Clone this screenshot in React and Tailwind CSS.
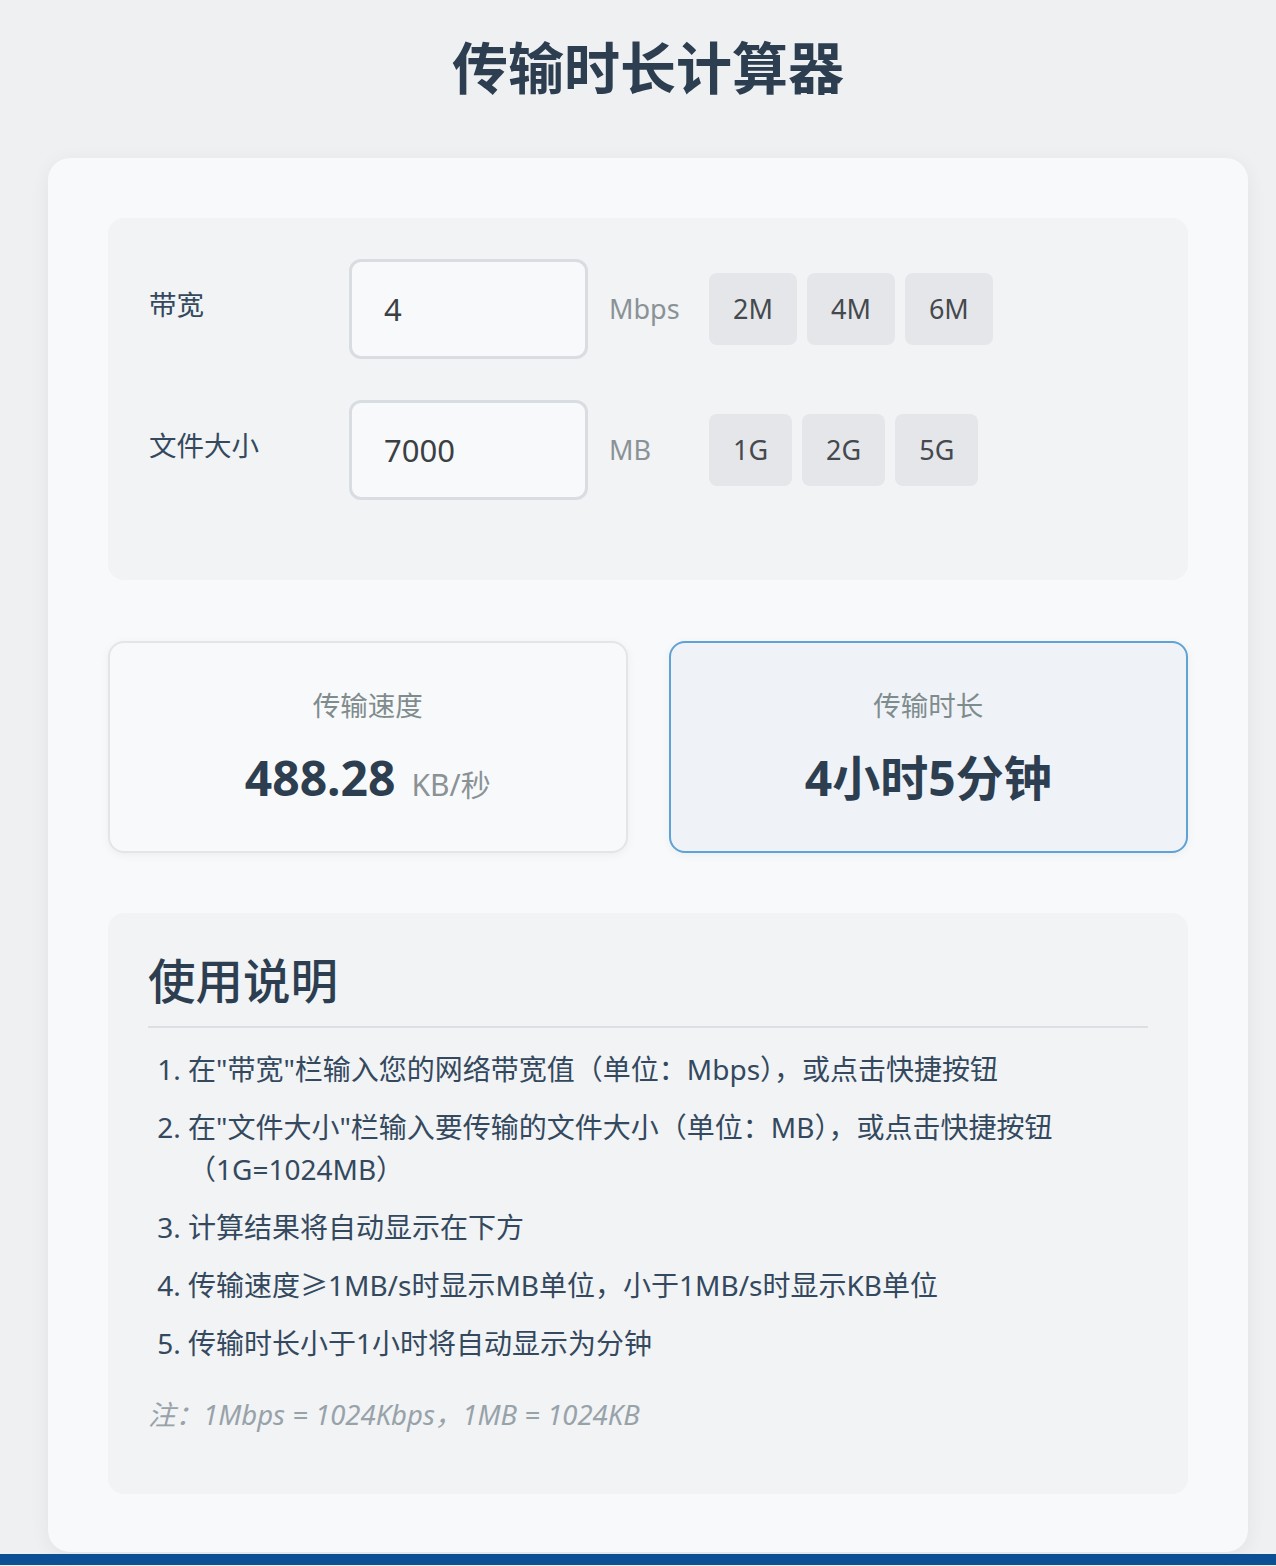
import { useState } from 'react';

const font = { fontFamily: '"Noto Sans", "Noto Sans CJK SC", sans-serif' };

// 1Mbps = 1000Kbps on the wire, shown in KB (1024)
function formatSpeed(mbps) {
  const kbs = (mbps * 1000 * 1000) / 8 / 1024;
  if (kbs >= 1024) return { value: (kbs / 1024).toFixed(2), unit: 'MB/秒' };
  return { value: kbs.toFixed(2), unit: 'KB/秒' };
}

function formatDuration(mbps, mb) {
  if (!mbps || !mb) return '--';
  const kbs = (mbps * 1000 * 1000) / 8 / 1024;
  const minutes = Math.round((mb * 1024) / kbs / 60);
  if (minutes < 60) return `${minutes}分钟`;
  return `${Math.floor(minutes / 60)}小时${minutes % 60}分钟`;
}

function QuickButton({ label, onClick }) {
  return (
    <button
      onClick={onClick}
      className="h-[72px] px-6 rounded-lg bg-[#e4e6e9] text-[27px] text-[#45494e] hover:bg-[#d9dce0] transition"
    >
      {label}
    </button>
  );
}

function InputRow({ label, value, onChange, unit, buttons }) {
  return (
    <div className="flex items-center">
      <div className="w-[200px] text-[27.5px] text-[#34495e] -mt-2">{label}</div>
      <input
        type="text"
        value={value}
        onChange={e => onChange(e.target.value)}
        className="w-[239px] h-[100px] rounded-xl border-[3px] border-[#d9dde2] bg-[#f8f9fa] px-[32px] text-[31px] text-[#3b4045] focus:outline-none"
      />
      <div className="w-[121px] pl-[21px] text-[27px] text-[#8a9296]">{unit}</div>
      <div className="flex gap-[10px]">{buttons}</div>
    </div>
  );
}

export default function App() {
  const [bandwidth, setBandwidth] = useState('4');
  const [size, setSize] = useState('7000');

  const speed = formatSpeed(parseFloat(bandwidth) || 0);
  const duration = formatDuration(parseFloat(bandwidth), parseFloat(size));

  return (
    <div className="min-h-[1566px] bg-[#eef0f2] flex flex-col" style={font}>
      <div className="w-[1200px] ml-[48px]">
        <h1 className="pt-[34px] h-[158px] text-center text-[56px] leading-[67px] font-bold text-[#2c3e50]">
          传输时长计算器
        </h1>

        {/* Main card */}
        <div className="rounded-[22px] bg-[#f8f9fa] shadow-[0_4px_20px_rgba(0,0,0,0.06)] px-[60px] pt-[60px] pb-[58px]">
          {/* Inputs */}
          <div className="rounded-2xl bg-[#f1f3f5] pl-[41px] pt-[41px] pb-[80px] flex flex-col gap-[41px]">
            <InputRow
              label="带宽"
              value={bandwidth}
              onChange={setBandwidth}
              unit="Mbps"
              buttons={['2', '4', '6'].map(v => (
                <QuickButton key={v} label={`${v}M`} onClick={() => setBandwidth(v)} />
              ))}
            />
            <InputRow
              label="文件大小"
              value={size}
              onChange={setSize}
              unit="MB"
              buttons={[1, 2, 5].map(v => (
                <QuickButton key={v} label={`${v}G`} onClick={() => setSize(String(v * 1024))} />
              ))}
            />
          </div>

          {/* Results */}
          <div className="grid grid-cols-2 gap-[41px] mt-[61px]">
            <div className="h-[212px] rounded-2xl border-2 border-[#e3e5e8] bg-[#f8f9fa] shadow-[0_2px_10px_rgba(0,0,0,0.05)] flex flex-col items-center justify-center gap-[24px]">
              <div className="text-[27.5px] leading-[38px] text-[#7f8c8d]">传输速度</div>
              <div className="flex items-baseline gap-[16px]">
                <span className="text-[48px] leading-[58px] font-bold text-[#2c3e50]">{speed.value}</span>
                <span className="text-[30px] text-[#8a9296]">{speed.unit}</span>
              </div>
            </div>
            <div className="h-[212px] rounded-2xl border-2 border-[#5fa2d5] bg-[#eff3f8] shadow-[0_2px_10px_rgba(0,0,0,0.05)] flex flex-col items-center justify-center gap-[24px]">
              <div className="text-[27.5px] leading-[38px] text-[#7f8c8d]">传输时长</div>
              <div className="text-[48px] leading-[58px] font-bold text-[#2c3e50]">{duration}</div>
            </div>
          </div>

          {/* Instructions */}
          <div className="mt-[60px] rounded-2xl bg-[#f1f3f5] px-[40px] pt-[40px] pb-[58px]">
            <h2 className="text-[47.5px] leading-[56px] font-medium text-[#2c3e50] pb-[17px] border-b-2 border-[#dcdfe3]">
              使用说明
            </h2>
            <ol className="list-decimal pl-[40px] mt-[20px] flex flex-col gap-[16px] text-[28px] leading-[42px] text-[#34495e]">
              <li>在"带宽"栏输入您的网络带宽值（单位：Mbps），或点击快捷按钮</li>
              <li>在"文件大小"栏输入要传输的文件大小（单位：MB），或点击快捷按钮（1G=1024MB）</li>
              <li>计算结果将自动显示在下方</li>
              <li>传输速度≥1MB/s时显示MB单位，小于1MB/s时显示KB单位</li>
              <li>传输时长小于1小时将自动显示为分钟</li>
            </ol>
            <p className="mt-[30px] text-[27.5px] leading-[42px] italic text-[#98a2a9]">
              注：1Mbps = 1024Kbps，1MB = 1024KB
            </p>
          </div>
        </div>
      </div>

      <div className="mt-[2px] h-[11px] bg-[#0b4f94]" />
    </div>
  );
}
